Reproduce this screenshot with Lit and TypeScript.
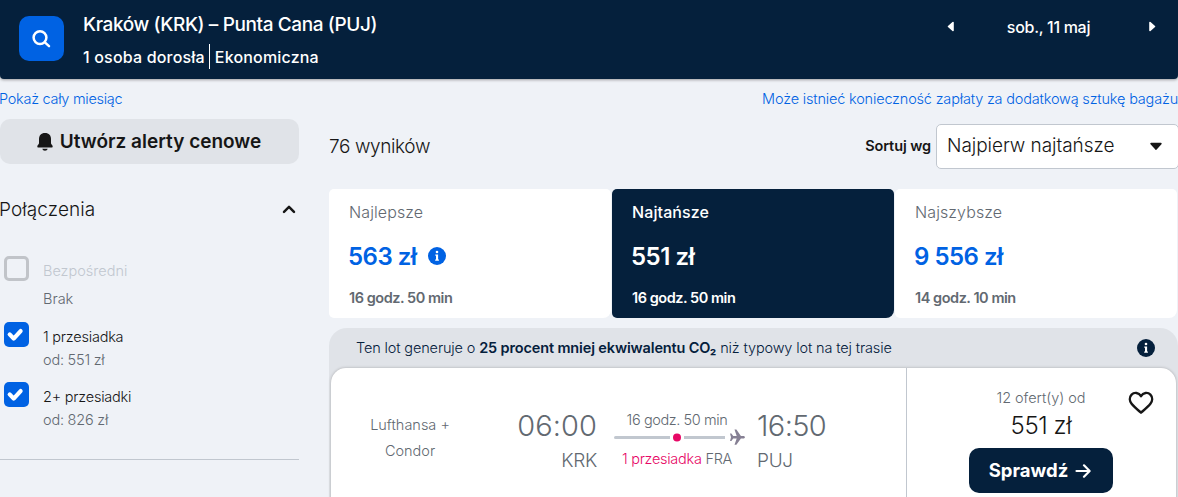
import { html, css, LitElement } from 'lit'
import { customElement, property, state } from 'lit/decorators.js'
import { classMap } from 'lit/directives/class-map.js'

interface Stop {
  cls: string
  label: string
  price: string
  checked: boolean
  disabled: boolean
}

const tabs = [
  { id: 'best', label: 'Najlepsze', price: '563 zł', time: '16 godz. 50 min', info: true },
  { id: 'cheapest', label: 'Najtańsze', price: '551 zł', time: '16 godz. 50 min', info: false },
  { id: 'fastest', label: 'Najszybsze', price: '9 556 zł', time: '14 godz. 10 min', info: false },
]

const infoIcon = html`
  <svg class="info" width="18" height="18" viewBox="0 0 18 18">
    <circle cx="9" cy="9" r="9" fill="currentColor" />
    <circle cx="9" cy="5" r="1.3" fill="#fff" />
    <path d="M7.3 7.5h2.8v5h.8v1.3H7.2v-1.3H8V8.8h-.7z" fill="#fff" />
  </svg>
`

/**
 * stops filter
 */
@customElement('stops-filter')
export class StopsFilter extends LitElement {
  @state() stops: Stop[] = [
    { cls: 'direct', label: 'Bezpośredni', price: 'Brak', checked: false, disabled: true },
    { cls: 'one', label: '1 przesiadka', price: 'od: 551 zł', checked: true, disabled: false },
    { cls: 'two', label: '2+ przesiadki', price: 'od: 826 zł', checked: true, disabled: false },
  ]

  toggle(stop: Stop) {
    if (stop.disabled) return
    this.stops = this.stops.map((s) => (s === stop ? { ...s, checked: !s.checked } : s))
  }

  render() {
    return html`
      <div class="head">
        <span class="title">Połączenia</span>
        <svg width="14" height="10" viewBox="0 0 14 10">
          <path d="M2 6.8 7 1.9l5 4.9" fill="none" stroke="#161616" stroke-width="2.5"
            stroke-linecap="round" stroke-linejoin="round" />
        </svg>
      </div>
      ${this.stops.map(
        (s) => html`
          <div
            class=${classMap({ row: true, [s.cls]: true, disabled: s.disabled })}
            @click=${() => this.toggle(s)}
          >
            <span class=${classMap({ box: true, on: s.checked })}>
              ${s.checked
                ? html`<svg width="25" height="25" viewBox="0 0 25 25">
                    <path d="M5.7 12.4 9.7 16.6 16.6 9.1" fill="none" stroke="#fff"
                      stroke-width="4.2" stroke-linecap="round" stroke-linejoin="round" />
                  </svg>`
                : ''}
            </span>
            <div class="text">
              <div><span class="label">${s.label}</span></div>
              <div><span class="price">${s.price}</span></div>
            </div>
          </div>
        `,
      )}
    `
  }

  static get styles() {
    return css`
      :host {
        display: block;
        border-bottom: 1px solid #c1c7cf;
      }

      .head {
        display: flex;
        justify-content: space-between;
        align-items: center;
        height: 24px;
        margin: 34px 3px 34px 0;
      }

      .title {
        font-size: 19px;
        line-height: 24px;
        letter-spacing: 0.1px;
        margin-left: -1px;
      }

      .row {
        display: flex;
        height: 60px;
        padding-left: 4px;
        font-size: 14.5px;
        line-height: 23px;
        letter-spacing: -0.22px;
      }

      .direct {
        height: 66px;
        line-height: 28px;
        letter-spacing: 0;
      }

      .two {
        height: 77px;
      }

      .box {
        box-sizing: border-box;
        width: 25px;
        height: 25px;
        border: 3px solid #c1c4c9;
        border-radius: 5px;
      }

      .box.on {
        border: 0;
        background: #0062e3;
      }

      .box svg {
        display: block;
      }

      .text {
        padding: 3px 0 0 14px;
      }

      .direct .text {
        padding-top: 1px;
      }

      .price {
        color: #626971;
      }

      .disabled .label {
        color: #c1c7cf;
      }
    `
  }
}

/**
 * single flight result
 */
@customElement('flight-ticket')
export class FlightTicket extends LitElement {
  @property({ type: Boolean }) saved = false

  render() {
    return html`
      <div class="eco">
        <span class="eco-text"
          >Ten lot generuje o <b>25 procent mniej ekwiwalentu CO₂</b> niż typowy lot na tej trasie</span
        >
        ${infoIcon}
      </div>
      <div class="ticket">
        <div class="leg">
          <div class="airline">Lufthansa +<br />Condor</div>
          <div class="place from">
            <div class="time">06:00</div>
            <div class="code">KRK</div>
          </div>
          <div class="route">
            <div class="note duration">16 godz. 50 min</div>
            <svg width="131" height="14" viewBox="0 0 131 14">
              <path d="M1.5 7.5H56M70 7.5h41" stroke="#c1c7cf" stroke-width="3" />
              <circle cx="1.5" cy="7.5" r="1.5" fill="#c1c7cf" />
              <circle cx="63" cy="7.5" r="4" fill="#e70866" />
              <path
                d="M116 3.4h1.4l1.8 2.5h3.5L120.500-.5h1.900l4.500 6.400h2.900c1.500 0 1.500 2.500 0 2.500h-2.900l-4.500 6.400h-1.900l2.200-6.400h-3.500l-1.800 2.500H116l1-3.700z"
                fill="#868094" />
            </svg>
            <div class="note stop"><span class="red">1 przesiadka</span> FRA</div>
          </div>
          <div class="place to">
            <div class="time">16:50</div>
            <div class="code">PUJ</div>
          </div>
        </div>
        <div class="deal">
          <div class="offer">
            <div class="count">12 ofert(y) od</div>
            <div class="price">551 zł</div>
            <button>
              <span>Sprawdź</span>
              <svg width="16" height="16" viewBox="0 0 16 16">
                <path d="M1.500 8h13M9 2.300 14.600 8 9 13.700" fill="none" stroke="#fff"
                  stroke-width="2.200" stroke-linecap="round" stroke-linejoin="round" />
              </svg>
            </button>
          </div>
          <svg class="heart" width="26" height="24" viewBox="0 0 26 24"
            @click=${() => (this.saved = !this.saved)}>
            <path
              d="M13 5.200C10.800 1.300 6.200 1 3.600 3.600 1 6.300 1.500 10 3.600 12.700 6 15.700 9.500 18.600 13 21.700 16.500 18.600 20 15.700 22.400 12.700 24.500 10 25 6.300 22.400 3.600 19.800 1 15.200 1.300 13 5.200z"
              fill=${this.saved ? '#161616' : 'none'} stroke="#161616" stroke-width="2.400"
              stroke-linejoin="round" />
          </svg>
        </div>
      </div>
    `
  }

  static get styles() {
    return css`
      :host {
        display: block;
        margin-top: 10px;
        border-radius: 18px 18px 0 0;
        background: #e0e3e8;
        color: #626971;
      }

      .eco {
        display: flex;
        align-items: center;
        justify-content: space-between;
        height: 40px;
        padding: 0 23px 0 27px;
        color: #05203c;
      }

      .eco-text {
        padding-bottom: 2px;
        font-size: 14.5px;
        letter-spacing: -0.14px;
      }

      .eco-text b {
        font-weight: 600;
      }

      .ticket {
        display: flex;
        height: 140px;
        margin: 0 2px;
        border-radius: 15px 15px 0 0;
        background: #fff;
        box-shadow: 0 0 3px rgba(37, 32, 31, 0.3);
      }

      .leg {
        display: flex;
        box-sizing: border-box;
        width: 576px;
        border-right: 1px solid #c1c7cf;
      }

      .airline {
        width: 158px;
        padding-top: 44px;
        font-size: 14.5px;
        line-height: 26px;
        text-align: center;
      }

      .place {
        padding-top: 41px;
      }

      .from {
        width: 108px;
        text-align: right;
      }

      .time {
        font-size: 29px;
        line-height: 34px;
        letter-spacing: 0.1px;
      }

      .to .time {
        letter-spacing: -0.6px;
      }

      .code {
        margin-top: 6px;
        font-size: 19px;
        line-height: 24px;
        letter-spacing: -0.3px;
      }

      .route {
        width: 131px;
        margin: 0 12px 0 17px;
        padding-top: 42px;
      }

      .route svg {
        display: block;
        overflow: visible;
      }

      .note {
        width: 126px;
        font-size: 14.5px;
        line-height: 20px;
        letter-spacing: -0.28px;
        text-align: center;
        white-space: nowrap;
      }

      .duration {
        letter-spacing: -0.4px;
      }

      .stop {
        margin-top: 5px;
      }

      .red {
        color: #e70866;
      }

      .deal {
        display: grid;
        grid-template-columns: 144px 26px;
        column-gap: 15px;
        align-items: start;
        padding-left: 62px;
      }

      .offer {
        padding-top: 20px;
        text-align: center;
      }

      .count {
        font-size: 14.5px;
        line-height: 20px;
        letter-spacing: -0.05px;
      }

      .price {
        height: 30px;
        margin-top: 2px;
        color: #161616;
        font-size: 24px;
        line-height: 32px;
        letter-spacing: -0.4px;
      }

      button {
        display: flex;
        align-items: center;
        justify-content: center;
        gap: 7px;
        width: 144px;
        height: 45px;
        margin-top: 8px;
        padding: 0 2px 0 0;
        border: 0;
        border-radius: 10px;
        background: #05203c;
        color: #fff;
        font: 700 18.5px Inter, sans-serif;
      }

      button span {
        padding-bottom: 2px;
      }

      .heart {
        margin-top: 23px;
      }
    `
  }
}

/**
 * flight search results
 */
@customElement('app-root')
export class AppRoot extends LitElement {
  @state() active = 'cheapest'

  render() {
    return html`
      <header>
        <button class="search">
          <svg width="20" height="20" viewBox="0 0 20 20" fill="none" stroke="#fff"
            stroke-width="2.5" stroke-linecap="round">
            <circle cx="8" cy="8.6" r="6.4" />
            <path d="M12.900 13.400 17 17.100" />
          </svg>
        </button>
        <div class="query">
          <div class="cities"><span>Kraków (KRK) – Punta Cana (PUJ)</span></div>
          <div class="details">
            <span class="people">1 osoba dorosła</span><span class="cabin">Ekonomiczna</span>
          </div>
        </div>
        <div class="dates">
          <svg width="8" height="12" viewBox="0 0 8 12">
            <path d="M6 1.500v8L1.500 5.500z" fill="#fff" stroke="#fff" stroke-width="1.600"
              stroke-linejoin="round" />
          </svg>
          <span class="day">sob., 11 maj</span>
          <svg width="8" height="12" viewBox="0 0 8 12">
            <path d="M2 1.500v8l4.500-4z" fill="#fff" stroke="#fff" stroke-width="1.600"
              stroke-linejoin="round" />
          </svg>
        </div>
      </header>

      <nav>
        <a class="month">Pokaż cały miesiąc</a>
        <a class="bags">Może istnieć konieczność zapłaty za dodatkową sztukę bagażu</a>
      </nav>

      <main>
        <aside>
          <button class="alert">
            <svg width="18" height="20" viewBox="0 0 18 20" fill="#161616">
              <path
                d="M9 1C5 1 3 3.600 3 7v4.200c0 1.200-1.700 1.900-1.700 3.300 0 .6.4 1 1 1h13.400c.6 0 1-.4 1-1 0-1.400-1.700-2.100-1.700-3.300V7c0-3.400-2-6-6-6z" />
              <path d="M6.300 16.800h5.400c-.3 1.300-1.300 2-2.700 2s-2.400-.7-2.700-2z" />
            </svg>
            <span>Utwórz alerty cenowe</span>
          </button>
          <stops-filter></stops-filter>
        </aside>

        <section>
          <div class="toolbar">
            <span class="count">76 wyników</span>
            <span class="sort">Sortuj wg</span>
            <div class="select">
              <span>Najpierw najtańsze</span>
              <svg width="12" height="8" viewBox="0 0 12 8">
                <path d="M1.200 1.600h9.600L6 7z" fill="#161616" stroke="#161616"
                  stroke-width="1.800" stroke-linejoin="round" />
              </svg>
            </div>
          </div>

          <div class="tabs">
            ${tabs.map(
              (t) => html`
                <div
                  class=${classMap({ tab: true, active: t.id === this.active })}
                  @click=${() => (this.active = t.id)}
                >
                  <div class="label">${t.label}</div>
                  <div class="price"><span>${t.price}</span>${t.info ? infoIcon : ''}</div>
                  <div class="time">${t.time}</div>
                </div>
              `,
            )}
          </div>

          <flight-ticket></flight-ticket>
        </section>
      </main>
    `
  }

  static get styles() {
    return css`
      :host {
        display: block;
        height: 497px;
        overflow: hidden;
        background: #eff2f7;
        color: #161616;
        font-family: Inter, 'Open Sans', sans-serif;
        font-weight: 360;
      }

      button {
        padding: 0;
        border: 0;
        font-family: inherit;
      }

      header {
        display: flex;
        box-sizing: border-box;
        height: 79px;
        border-radius: 0 0 4px 4px;
        padding-left: 19px;
        background: #05203c;
        box-shadow: 0 1px 3px rgba(37, 32, 31, 0.4);
        color: #fff;
        font-weight: 480;
      }

      .search {
        display: flex;
        align-items: center;
        justify-content: center;
        width: 45px;
        height: 45px;
        margin-top: 16px;
        border-radius: 10px;
        background: #0062e3;
      }

      .query {
        flex: 1;
        padding: 13px 0 0 19px;
      }

      .cities {
        margin-bottom: 7px;
        font-size: 19px;
        line-height: 24px;
        letter-spacing: -0.39px;
      }

      .details {
        display: flex;
        font-size: 16px;
        line-height: 26px;
        letter-spacing: 0.18px;
      }

      .cabin {
        height: 25px;
        margin-left: 4px;
        padding-left: 5px;
        border-left: 1px solid #fff;
      }

      .dates {
        display: flex;
        align-items: center;
        justify-content: space-between;
        width: 209px;
        height: 25px;
        margin: 14px 22px 0 0;
        font-size: 16px;
        letter-spacing: -0.3px;
      }

      .day {
        margin-right: 6px;
      }

      nav {
        display: flex;
        justify-content: space-between;
        height: 30px;
        padding-top: 10px;
        color: #0062e3;
        font-size: 14.5px;
        line-height: 20px;
        letter-spacing: -0.18px;
      }

      .month {
        margin-left: -1px;
        letter-spacing: -0.28px;
      }

      main {
        display: grid;
        grid-template-columns: 299px 849px;
        column-gap: 30px;
      }

      .alert {
        display: flex;
        align-items: center;
        justify-content: center;
        gap: 6px;
        width: 299px;
        height: 45px;
        padding-right: 2px;
        border-radius: 10px;
        background: #e0e3e8;
        color: #161616;
        font-size: 19px;
        font-weight: 600;
      }

      .toolbar {
        display: flex;
        height: 70px;
      }

      .toolbar .count {
        flex: 1;
        padding-top: 16px;
        font-size: 19px;
        line-height: 24px;
        letter-spacing: -0.38px;
      }

      .sort {
        padding-top: 17px;
        font-size: 14.5px;
        font-weight: 600;
        line-height: 20px;
        letter-spacing: -0.1px;
      }

      .select {
        display: flex;
        align-items: center;
        justify-content: space-between;
        box-sizing: border-box;
        width: 243px;
        height: 45px;
        margin: 5px -1px 0 5px;
        padding: 0 16px 2px 10px;
        border: 1px solid #c1c7cf;
        border-radius: 5px;
        background: #fff;
        font-size: 19px;
        letter-spacing: -0.05px;
      }

      .tabs {
        display: grid;
        grid-template-columns: repeat(3, 282px);
        column-gap: 1px;
      }

      .tab {
        box-sizing: border-box;
        height: 129px;
        padding: 13px 20px 0;
        border-radius: 5px 5px 8px 5px;
        background: #fff;
        color: #626971;
      }

      .label {
        font-size: 16px;
        line-height: 20px;
        letter-spacing: 0.1px;
      }

      .price {
        display: flex;
        align-items: center;
        gap: 11px;
        height: 30px;
        margin: 19px 0 18px -1px;
        color: #0062e3;
        font-size: 24px;
        font-weight: 600;
        line-height: 30px;
        letter-spacing: -0.5px;
      }

      .price span {
        padding-top: 2px;
      }

      .time {
        font-size: 14.5px;
        font-weight: 600;
        line-height: 18px;
        letter-spacing: -0.46px;
      }

      .active,
      .active .price {
        color: #fff;
      }

      .active {
        background: #05203c;
      }

      .active .label {
        font-weight: 450;
      }
    `
  }
}
